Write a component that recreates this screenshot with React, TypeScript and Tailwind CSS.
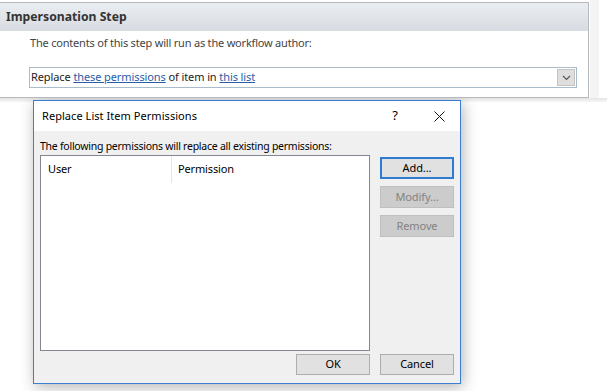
import React from 'react';

const font = { fontFamily: '"Noto Sans", "Open Sans", sans-serif' };

const Btn = ({ label, state }: { label: string; state?: 'default' | 'disabled' }) => {
    if (state === 'default') {
        return (
            <div className="w-[74px] h-[22px] border-2 border-[#2f7ad3] bg-[#e1e1e1] flex items-center justify-center text-[11px] tracking-[-0.1px] text-black">
                {label}
            </div>
        );
    }
    if (state === 'disabled') {
        return (
            <div className="w-[74px] h-[22px] border border-[#bfbfbf] bg-[#cccccc] flex items-center justify-center text-[11px] tracking-[-0.1px] text-[#838383]">
                {label}
            </div>
        );
    }
    return (
        <div className="w-[74px] h-[21px] border border-[#adadad] bg-[#e1e1e1] flex items-center justify-center text-[11px] tracking-[-0.1px] text-black">
            {label}
        </div>
    );
};

export default function App() {
    return (
        <div className="w-[607px] h-[391px] bg-white overflow-hidden" style={font}>
            {/* Workflow step panel */}
            <div className="flex">
                <div className="w-[589px] mt-[2px] border-t border-r border-b border-[#b6babf]">
                    <div className="h-[28px] bg-gradient-to-b from-[#eaedf0] to-[#d8dce2] pl-[6px] flex items-center">
                        <span className="text-[12.2px] font-bold text-[#333]">Impersonation Step</span>
                    </div>
                    <div className="bg-white pl-[29px] pr-[11px] pt-[4px] pb-[9px]">
                        <p className="text-[11px] tracking-[-0.2px] leading-[16px] text-[#444] pl-[1px]">
                            The contents of this step will run as the workflow author:
                        </p>
                        <div className="mt-[16px] h-[21px] border border-[#a9bcc9] flex items-center justify-between">
                            <span className="text-[11px] tracking-[-0.1px] text-[#222] pl-[1px]">
                                Replace <span className="text-[#2a5ca8] underline">these permissions</span> of item in{' '}
                                <span className="text-[#2a5ca8] underline">this list</span>
                            </span>
                            <div className="w-[18px] h-[17px] mr-[1px] bg-[#dedede] border border-[#c4c4c4] flex items-center justify-center">
                                <svg width="9" height="6" viewBox="0 0 9 6">
                                    <path d="M1 1l3.5 3.5L8 1" stroke="#555" strokeWidth="1.2" fill="none" />
                                </svg>
                            </div>
                        </div>
                    </div>
                </div>
                <div className="w-[9px] ml-[1px] bg-[#f4f4f4]" />
            </div>
            <div className="h-[4px] bg-gradient-to-b from-[#e4e4e4] to-[#f6f6f6]" />

            {/* Dialog window */}
            <div className="ml-[33px] -mt-[2px] w-[428px] h-[284px] border border-[#3b80d0] bg-[#f0f0f0] shadow-[2px_3px_14px_rgba(0,0,0,0.3)] flex flex-col">
                <div className="h-[30px] bg-white flex items-center pl-[8px] pr-[15px]">
                    <span className="text-[11px] tracking-[0.05px] text-black flex-1">Replace List Item Permissions</span>
                    <span className="text-[13px] text-black mr-[36px]">?</span>
                    <svg width="11" height="11" viewBox="0 0 11 11">
                        <path d="M0.5 0.5l10 10M10.5 0.5l-10 10" stroke="#111" strokeWidth="1" />
                    </svg>
                </div>
                <div className="flex-1 px-[6px] pt-[7px] pb-[8px] flex flex-col">
                    <p className="text-[10.5px] tracking-[-0.25px] leading-[16px] text-black">
                        The following permissions will replace all existing permissions:
                    </p>
                    <div className="flex gap-[10px] mt-[1px]">
                        <div className="w-[330px] h-[196px] border border-[#828790] bg-white">
                            <div className="flex h-[27px] text-[11px] tracking-[-0.15px] text-black">
                                <div className="w-[131px] pl-[7px] flex items-center border-r border-[#e5e5e5]">User</div>
                                <div className="pl-[6px] flex items-center">Permission</div>
                            </div>
                        </div>
                        <div className="flex flex-col gap-[7px] pt-[2px]">
                            <Btn label="Add..." state="default" />
                            <Btn label="Modify..." state="disabled" />
                            <Btn label="Remove" state="disabled" />
                        </div>
                    </div>
                    <div className="mt-auto flex justify-end gap-[10px]">
                        <Btn label="OK" />
                        <Btn label="Cancel" />
                    </div>
                </div>
            </div>
        </div>
    );
}
